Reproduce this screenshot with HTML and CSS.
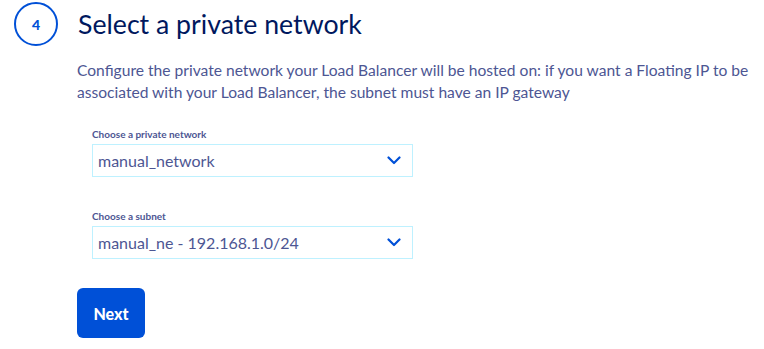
FILE: index.html
```html
<!DOCTYPE html>
<html lang="en">
<head>
<meta charset="utf-8">
<title>Select a private network</title>
<link rel="stylesheet" href="styles.css">
</head>
<body>
<section class="step">
  <header class="step-header">
    <div class="step-badge">4</div>
    <h2 class="step-title">Select a private network</h2>
  </header>
  <div class="step-body">
    <p class="step-desc">Configure the private network your Load Balancer will be hosted on: if you want a Floating IP to be associated with your Load Balancer, the subnet must have an IP gateway</p>
    <div class="fields">
      <div class="field">
        <label class="field-label">Choose a private network</label>
        <div class="select">
          <span class="select-value">manual_network</span>
          <svg class="chevron" width="14" height="9" viewBox="0 0 14 9"><path d="M1.5 1.5 L7 7 L12.5 1.5" fill="none" stroke="#0050d7" stroke-width="2.2" stroke-linecap="round" stroke-linejoin="round"/></svg>
        </div>
      </div>
      <div class="field">
        <label class="field-label">Choose a subnet</label>
        <div class="select">
          <span class="select-value">manual_ne - 192.168.1.0/24</span>
          <svg class="chevron" width="14" height="9" viewBox="0 0 14 9"><path d="M1.5 1.5 L7 7 L12.5 1.5" fill="none" stroke="#0050d7" stroke-width="2.2" stroke-linecap="round" stroke-linejoin="round"/></svg>
        </div>
      </div>
    </div>
    <button class="btn-next" type="button">Next</button>
  </div>
</section>
</body>
</html>
```
FILE: styles.css
```css
* { box-sizing: border-box; }
body {
  margin: 0;
  background: #ffffff;
  font-family: "Lato", "Open Sans", sans-serif;
}
.step { padding: 2px 0 0 14px; }
.step-header {
  display: flex;
  align-items: center;
  height: 44px;
}
.step-badge {
  width: 44px;
  height: 44px;
  border: 2px solid #0050d7;
  border-radius: 50%;
  display: flex;
  align-items: center;
  justify-content: center;
  color: #0050d7;
  font-weight: 900;
  font-size: 14px;
}
.step-title {
  margin: 0 0 0 20px;
  font-size: 26.7px;
  font-weight: 400;
  color: #00185e;
  line-height: 36px;
}
.step-body { padding-left: 63px; }
.step-desc {
  margin: 13px 0 0 0;
  width: 680px;
  font-size: 15.6px;
  line-height: 22px;
  color: #4d5693;
}
.fields {
  padding-left: 15px;
  margin-top: 24px;
  display: flex;
  flex-direction: column;
  gap: 32px;
}
.field { display: flex; flex-direction: column; }
.field-label {
  font-size: 10px;
  font-weight: 700;
  color: #4d5693;
  line-height: 14px;
  margin-bottom: 3px;
}
.select {
  width: 321px;
  height: 33px;
  border: 1px solid #bef1ff;
  display: flex;
  align-items: center;
  justify-content: space-between;
  padding: 0 11px 0 5px;
}
.select-value {
  font-size: 16px;
  color: #4d5693;
}
.btn-next {
  margin-top: 29px;
  width: 68px;
  height: 50px;
  border: none;
  border-radius: 6px;
  background: #0050d7;
  color: #fff;
  font-family: inherit;
  font-size: 16px;
  font-weight: 900;
  padding: 0;
}
```
